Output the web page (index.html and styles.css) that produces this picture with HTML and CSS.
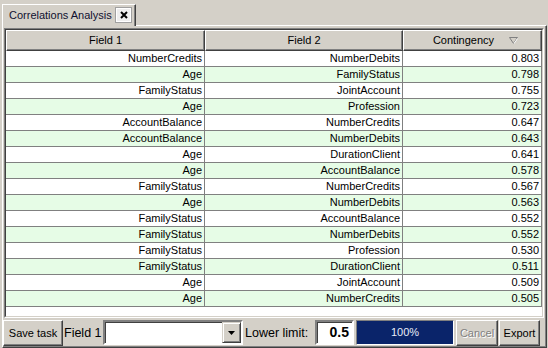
FILE: index.html
```html
<!DOCTYPE html>
<html lang="en">
<head>
    <meta charset="UTF-8">
    <title>Correlations Analysis</title>
    <link rel="stylesheet" href="styles.css">
</head>
<body>

    <div class="tabs">
        <div class="tab">
            <span class="tab-title">Correlations Analysis</span>
            <span class="close">
                <svg width="8" height="8" viewBox="0 0 8 8"><path d="M1 1L7 7M7 1L1 7" stroke="#000" stroke-width="2"/></svg>
            </span>
        </div>
    </div>

    <div class="panel">
        <div class="grid-wrap">
            <div class="grid-inner">
                <table class="grid">
                    <colgroup>
                        <col class="col-f1">
                        <col class="col-f2">
                        <col class="col-c">
                    </colgroup>
                    <thead>
                        <tr>
                            <th>Field 1</th>
                            <th>Field 2</th>
                            <th><span class="sort-head">Contingency
                                <svg class="sort" width="9" height="7" viewBox="0 0 9 7"><path d="M0.5 0.5H8.5L4.5 6.5Z" fill="none" stroke="#808080"/><path d="M8.5 1.5L5 6.5" stroke="#fff"/></svg>
                            </span></th>
                        </tr>
                    </thead>
                    <tbody>
                        <tr><td>NumberCredits</td><td>NumberDebits</td><td>0.803</td></tr>
                        <tr><td>Age</td><td>FamilyStatus</td><td>0.798</td></tr>
                        <tr><td>FamilyStatus</td><td>JointAccount</td><td>0.755</td></tr>
                        <tr><td>Age</td><td>Profession</td><td>0.723</td></tr>
                        <tr><td>AccountBalance</td><td>NumberCredits</td><td>0.647</td></tr>
                        <tr><td>AccountBalance</td><td>NumberDebits</td><td>0.643</td></tr>
                        <tr><td>Age</td><td>DurationClient</td><td>0.641</td></tr>
                        <tr><td>Age</td><td>AccountBalance</td><td>0.578</td></tr>
                        <tr><td>FamilyStatus</td><td>NumberCredits</td><td>0.567</td></tr>
                        <tr><td>Age</td><td>NumberDebits</td><td>0.563</td></tr>
                        <tr><td>FamilyStatus</td><td>AccountBalance</td><td>0.552</td></tr>
                        <tr><td>FamilyStatus</td><td>NumberDebits</td><td>0.552</td></tr>
                        <tr><td>FamilyStatus</td><td>Profession</td><td>0.530</td></tr>
                        <tr><td>FamilyStatus</td><td>DurationClient</td><td>0.511</td></tr>
                        <tr><td>Age</td><td>JointAccount</td><td>0.509</td></tr>
                        <tr><td>Age</td><td>NumberCredits</td><td>0.505</td></tr>
                    </tbody>
                </table>
            </div>
        </div>

        <div class="toolbar">
            <button class="btn btn-save">Save task</button>
            <span class="label label-field">Field 1</span>
            <div class="combo">
                <span class="combo-btn">
                    <svg width="7" height="4" viewBox="0 0 7 4"><path d="M0 0H7L3.5 4Z" fill="#000"/></svg>
                </span>
            </div>
            <span class="label label-limit">Lower limit:</span>
            <div class="limit">0.5</div>
            <div class="progress">100%</div>
            <button class="btn btn-cancel" disabled>Cancel</button>
            <button class="btn btn-export">Export</button>
        </div>
    </div>

</body>
</html>
```

FILE: styles.css
```css
body {
    margin: 0;
    width: 548px;
    height: 348px;
    overflow: hidden;
    background-color: #d4d0c8;
    font-family: "Liberation Sans", Arial, sans-serif;
    font-size: 11px;
    color: #000;
}

/* tab strip */
.tabs {
    height: 25px;
    display: flex;
    align-items: flex-end;
}
.tab {
    position: relative;
    z-index: 1;
    margin-left: 2px;
    margin-bottom: -1px;
    width: 134px;
    height: 22px;
    box-sizing: border-box;
    padding: 0 3px 1px 6px;
    display: flex;
    align-items: center;
    justify-content: space-between;
    background-color: #d4d0c8;
    border-top: 1px solid #fff;
    border-left: 1px solid #fff;
    border-right: 1px solid #404040;
    box-shadow: inset -1px 0 #808080;
}
.tab-title {
    white-space: nowrap;
    font-size: 11px;
    color: #101030;
}
.close {
    flex: none;
    width: 17px;
    height: 16px;
    box-sizing: border-box;
    display: flex;
    align-items: center;
    justify-content: center;
    border: 1px solid #a0a0a0;
    box-shadow: inset 1px 1px #fff, inset -1px -1px #fff;
    background-color: #eeeeee;
}

/* main panel */
.panel {
    margin-left: 2px;
    width: 545px;
    height: 323px;
    box-sizing: border-box;
    padding: 2px 2px 0 1px;
    display: flex;
    flex-direction: column;
    border-top: 1px solid #fff;
    border-left: 1px solid #fff;
    border-right: 1px solid #404040;
    border-bottom: 1px solid #404040;
    box-shadow: inset -1px -1px #808080;
}
.grid-wrap {
    height: 290px;
    box-sizing: border-box;
    border: 1px solid;
    border-color: #808080 #fff #fff #808080;
}
.grid-inner {
    height: 100%;
    box-sizing: border-box;
    border: 1px solid;
    border-color: #404040 #d4d0c8 #d4d0c8 #404040;
    background-color: #fff;
    overflow: hidden;
}

/* grid */
.grid {
    width: 100%;
    border-spacing: 0;
    table-layout: fixed;
}
.col-f1 {
    width: 199px;
}
.col-f2 {
    width: 198px;
}
.grid th {
    padding: 0;
    font-weight: normal;
    line-height: 19px;
    background-color: #d4d0c8;
    border-top: 1px solid #fff;
    border-left: 1px solid #fff;
    border-right: 1px solid #404040;
    border-bottom: 1px solid #404040;
    box-shadow: inset -1px -1px #808080;
}
.sort-head {
    display: inline-flex;
    align-items: center;
    gap: 15px;
    margin-left: 6px;
}
.grid td {
    padding: 0 2px 0 0;
    line-height: 15px;
    text-align: right;
    white-space: nowrap;
    border-right: 1px solid #808080;
    border-bottom: 1px solid #808080;
}
.grid tbody tr:nth-child(even) td {
    background-color: #e6fce6;
}

/* bottom toolbar */
.toolbar {
    flex: 1;
    display: flex;
    align-items: center;
    margin-left: -1px;
}
.btn {
    height: 26px;
    box-sizing: border-box;
    padding: 0;
    font-family: inherit;
    font-size: 11px;
    color: #000;
    background-color: #d4d0c8;
    border: 1px solid;
    border-color: #fff #404040 #404040 #fff;
    box-shadow: inset -1px -1px #808080;
}
.btn-save {
    width: 60px;
}
.btn-cancel {
    width: 42px;
    margin-left: 2px;
    color: #808080;
    text-shadow: 1px 1px #fff;
}
.btn-export {
    width: 41px;
    margin-left: 1px;
}
.label {
    font-size: 12.5px;
    white-space: nowrap;
}
.label-field {
    width: 38px;
    margin-left: 1px;
}
.label-limit {
    width: 70px;
    margin-left: 2px;
}
.combo {
    width: 140px;
    height: 25px;
    margin-left: 1px;
    box-sizing: border-box;
    display: flex;
    justify-content: flex-end;
    background-color: #fff;
    border: 2px solid;
    border-color: #808080 #fff #fff #808080;
    box-shadow: inset 1px 1px #404040;
}
.combo-btn {
    width: 19px;
    height: 21px;
    box-sizing: border-box;
    display: flex;
    align-items: center;
    justify-content: center;
    background-color: #d4d0c8;
    border: 1px solid;
    border-color: #d4d0c8 #404040 #404040 #d4d0c8;
    box-shadow: inset 1px 1px #fff, inset -1px -1px #808080;
}
.limit {
    width: 39px;
    height: 25px;
    box-sizing: border-box;
    padding-right: 3px;
    text-align: right;
    line-height: 21px;
    font-size: 14px;
    font-weight: bold;
    background-color: #fff;
    border: 2px solid;
    border-color: #808080 #fff #fff #808080;
    box-shadow: inset 1px 1px #404040;
}
.progress {
    width: 98px;
    height: 25px;
    margin-left: 2px;
    box-sizing: border-box;
    text-align: center;
    line-height: 23px;
    color: #e8ecf8;
    background-color: #0a246a;
    border: 1px solid;
    border-color: #808080 #fff #fff #808080;
}
```
